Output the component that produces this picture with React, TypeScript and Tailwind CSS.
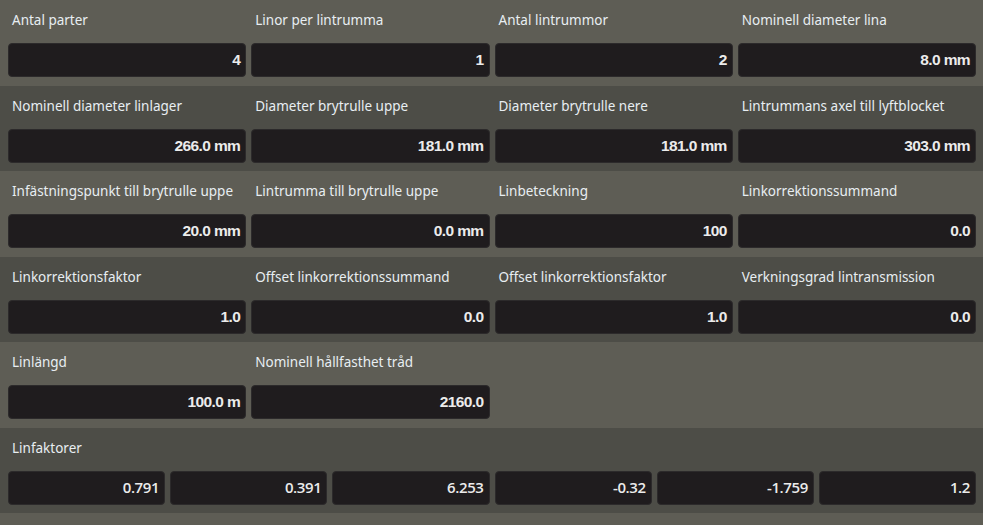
import type { ReactNode } from "react";

type Field = { label: string; value: string };

const rows: { bg: string; fields: Field[] }[] = [
  {
    bg: "bg-[#5e5d55]",
    fields: [
      { label: "Antal parter", value: "4" },
      { label: "Linor per lintrumma", value: "1" },
      { label: "Antal lintrummor", value: "2" },
      { label: "Nominell diameter lina", value: "8.0 mm" },
    ],
  },
  {
    bg: "bg-[#4d4d47]",
    fields: [
      { label: "Nominell diameter linlager", value: "266.0 mm" },
      { label: "Diameter brytrulle uppe", value: "181.0 mm" },
      { label: "Diameter brytrulle nere", value: "181.0 mm" },
      { label: "Lintrummans axel till lyftblocket", value: "303.0 mm" },
    ],
  },
  {
    bg: "bg-[#5e5d55]",
    fields: [
      { label: "Infästningspunkt till brytrulle uppe", value: "20.0 mm" },
      { label: "Lintrumma till brytrulle uppe", value: "0.0 mm" },
      { label: "Linbeteckning", value: "100" },
      { label: "Linkorrektionssummand", value: "0.0" },
    ],
  },
  {
    bg: "bg-[#4d4d47]",
    fields: [
      { label: "Linkorrektionsfaktor", value: "1.0" },
      { label: "Offset linkorrektionssummand", value: "0.0" },
      { label: "Offset linkorrektionsfaktor", value: "1.0" },
      { label: "Verkningsgrad lintransmission", value: "0.0" },
    ],
  },
  {
    bg: "bg-[#5e5d55]",
    fields: [
      { label: "Linlängd", value: "100.0 m" },
      { label: "Nominell hållfasthet tråd", value: "2160.0" },
    ],
  },
];

const factors = ["0.791", "0.391", "6.253", "-0.32", "-1.759", "1.2"];

function Label({ children }: { children: ReactNode }) {
  return (
    <div className="h-[43px] pl-[4px] pt-[11px] text-[13.5px] leading-[18px] text-[#e8eef2] whitespace-nowrap font-['Noto_Sans',sans-serif]">
      {children}
    </div>
  );
}

function Box({ value, thin }: { value: string; thin?: boolean }) {
  return (
    <div
      className={`flex h-[34px] items-center justify-end rounded-[4px] border border-[#2c2a2b] bg-[#1f1c1e] px-[5px] text-[#ebebeb] ${
        thin
          ? "text-[15px] font-semibold tracking-[-0.4px] font-['Open_Sans',sans-serif]"
          : "text-[15.5px] font-bold tracking-[-0.6px] font-['Liberation_Sans',Arial,sans-serif]"
      }`}
    >
      {value}
    </div>
  );
}

export default function App() {
  return (
    <div className="h-[525px] w-[983px] overflow-hidden bg-[#5e5d55]">
      {rows.map((row, i) => (
        <div key={i} className={`h-[85.5px] pl-[8px] pr-[7px] ${row.bg}`}>
          <div className="grid grid-cols-4 gap-x-[5px]">
            {row.fields.map((f) => (
              <div key={f.label}>
                <Label>{f.label}</Label>
                <Box value={f.value} />
              </div>
            ))}
          </div>
        </div>
      ))}
      <div className="h-[85px] bg-[#4d4d47] pl-[8px] pr-[7px]">
        <Label>Linfaktorer</Label>
        <div className="grid grid-cols-6 gap-x-[5px]">
          {factors.map((v, i) => (
            <Box key={i} value={v} thin />
          ))}
        </div>
      </div>
    </div>
  );
}
